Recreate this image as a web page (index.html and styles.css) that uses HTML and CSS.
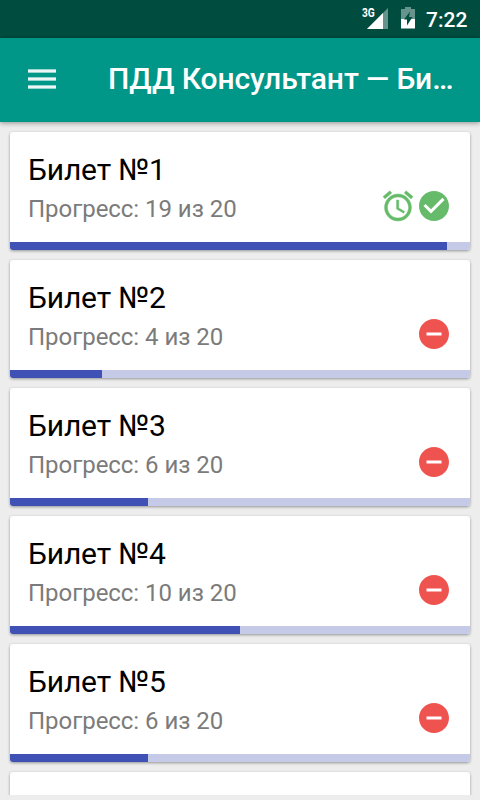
FILE: index.html
```
<!DOCTYPE html>
<html lang="ru">
<head>
<meta charset="utf-8">
<title>ПДД Консультант</title>
<link rel="stylesheet" href="styles.css">
</head>
<body>
<svg class="defs" width="0" height="0">
  <symbol id="minus" viewBox="0 0 24 24"><path d="M12 2C6.48 2 2 6.48 2 12s4.480 10 10 10 10-4.480 10-10S17.520 2 12 2zm5 11H7v-2h10v2z"/></symbol>
</svg>
<div class="status">
  <div class="signal">
    <span class="net">3G</span>
    <svg width="22" height="21" viewBox="0 0 22 21"><path d="M22 0V21H1z" fill="#fff" opacity=".4"/><path d="M17 5V21H1z" fill="#fff"/></svg>
  </div>
  <svg class="battery" width="14" height="22" viewBox="0 0 14 22"><path d="M4 0h6v2h4v10H0V2h4z" fill="#fff" opacity=".4"/><path d="M0 12h14v9.500H0z" fill="#fff"/><path d="M9 4.500L3 12.500H6V18.500L11.500 10H8z" fill="#004d40"/></svg>
  <span class="clock">7:22</span>
</div>
<header class="bar">
  <svg class="menu" width="28" height="20" viewBox="0 0 28 20"><g fill="#fff"><path opacity=".6" d="M0 0h28v4H0zM0 8h28v4H0zM0 16h28v4H0z"/><path opacity=".8" d="M0 1h28v2H0zM0 9h28v2H0zM0 17h28v2H0z"/></g></svg>
  <h1>ПДД Консультант — Би…</h1>
</header>
<main class="list">
  <section class="card"><div class="body"><div><h2>Билет №1</h2><p>Прогресс: 19 из 20</p></div>
    <div class="icons good">
      <svg class="alarm" viewBox="0 0 24 24"><path d="M22 5.720l-4.600-3.860-1.290 1.530 4.600 3.860L22 5.720zM7.880 3.390L6.600 1.860 2 5.710l1.290 1.530 4.590-3.850zM12.500 8H11v6l4.750 2.850.75-1.230-4-2.370V8zM12 4c-4.970 0-9 4.030-9 9s4.020 9 9 9c4.970 0 9-4.030 9-9s-4.030-9-9-9zm0 16c-3.870 0-7-3.130-7-7s3.130-7 7-7 7 3.130 7 7-3.130 7-7 7z"/></svg>
      <svg viewBox="0 0 24 24"><path d="M12 2C6.480 2 2 6.480 2 12s4.480 10 10 10 10-4.480 10-10S17.520 2 12 2zm-2 15l-5-5 1.410-1.410L10 14.170l7.590-7.590L19 8l-9 9z"/></svg>
    </div></div><div class="track"><div class="fill" style="width:95%"></div></div></section>
  <section class="card"><div class="body"><div><h2>Билет №2</h2><p>Прогресс: 4 из 20</p></div><div class="icons bad"><svg><use href="#minus"/></svg></div></div><div class="track"><div class="fill" style="width:20%"></div></div></section>
  <section class="card"><div class="body"><div><h2>Билет №3</h2><p>Прогресс: 6 из 20</p></div><div class="icons bad"><svg><use href="#minus"/></svg></div></div><div class="track"><div class="fill" style="width:30%"></div></div></section>
  <section class="card"><div class="body"><div><h2>Билет №4</h2><p>Прогресс: 10 из 20</p></div><div class="icons bad"><svg><use href="#minus"/></svg></div></div><div class="track"><div class="fill" style="width:50%"></div></div></section>
  <section class="card"><div class="body"><div><h2>Билет №5</h2><p>Прогресс: 6 из 20</p></div><div class="icons bad"><svg><use href="#minus"/></svg></div></div><div class="track"><div class="fill" style="width:30%"></div></div></section>
  <section class="card"></section>
</main>
</body>
</html>
```
FILE: styles.css
```
* { box-sizing: border-box; margin: 0; }
body {
  display: flex;
  flex-direction: column;
  width: 480px;
  height: 800px;
  padding-bottom: 5px;
  overflow: hidden;
  background: #ededed;
  font-family: Roboto, sans-serif;
}
.defs { position: absolute; }
.status {
  flex: none;
  display: flex;
  height: 38px;
  padding: 8px 11px 0 0;
  justify-content: flex-end;
  background: #004d40;
  color: #fff;
}
.signal { display: flex; width: 26px; margin-right: 13px; }
.signal svg { flex: none; margin-left: -10px; }
.net { flex: none; width: 14px; font: 700 12px/11px Roboto, sans-serif; transform: scaleX(.85); transform-origin: left; }
.battery { margin: -1px 11px 0 0; }
.clock { width: 43px; font-size: 21px; line-height: 24px; font-weight: 500; white-space: nowrap; }
.bar {
  flex: none;
  position: relative;
  z-index: 1;
  display: flex;
  align-items: center;
  height: 84px;
  padding: 0 20px 0 28px;
  background: #009688;
  box-shadow: 0 1px 5px rgba(0, 0, 0, .4);
  color: #fff;
}
.menu { flex: none; margin: 0 52px 2px 0; }
h1 {
  flex: 1;
  margin-bottom: 2px;
  white-space: nowrap;
  font-size: 30px;
  line-height: 36px;
  font-weight: 500;
  letter-spacing: -.08px;
}
.list {
  flex: 1;
  min-height: 0;
  overflow: hidden;
  display: flex;
  flex-direction: column;
  gap: 10px;
  padding: 10px 10px 0;
}
.card {
  flex: none;
  height: 118px;
  display: flex;
  flex-direction: column;
  border-radius: 3px;
  background: #fff;
  box-shadow: 0 1px 3px rgba(0, 0, 0, .38);
}
.body {
  flex: 1;
  display: flex;
  justify-content: space-between;
  align-items: flex-start;
  padding: 20px 18px 0;
}
h2 { font-size: 30px; line-height: 36px; font-weight: 400; color: #000; letter-spacing: -.15px; }
p { margin-top: 6px; font-size: 24px; line-height: 30px; color: #7b7b7b; letter-spacing: -.04px; }
.icons { display: flex; margin-top: 36px; }
.icons svg { width: 36px; height: 36px; }
.alarm { stroke: #66bb6a; stroke-width: .25; }
.good { fill: #66bb6a; }
.bad { fill: #ef5350; }
.track { height: 8px; overflow: hidden; border-radius: 0 0 3px 3px; background: #c5cae9; }
.fill { height: 8px; background: #3f51b5; }
```
